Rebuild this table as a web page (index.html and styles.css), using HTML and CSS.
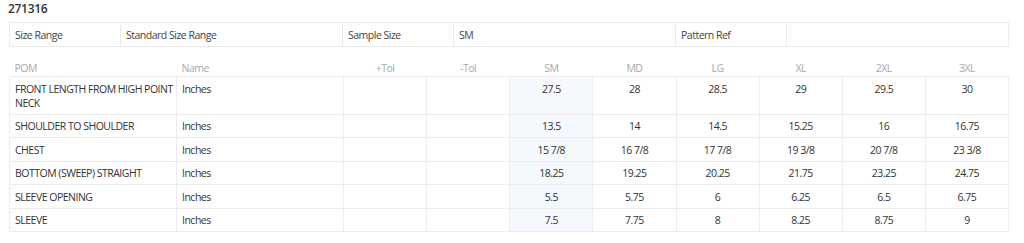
FILE: index.html
```html
<!DOCTYPE html>
<html lang="en">
<head>
<meta charset="utf-8">
<title>271316</title>
<link rel="stylesheet" href="styles.css">
</head>
<body>
<div class="ghost" aria-hidden="true">
  <span class="g1">rns</span>
  <span class="g2">nents</span>
  <span class="g3">missions</span>
  <span class="g4">Choices</span>
</div>
<main class="page">
  <h1 class="title">271316</h1>
  <table class="info">
    <colgroup>
      <col class="c-label"><col class="c-value"><col class="c-label"><col class="c-value"><col class="c-label"><col class="c-value">
    </colgroup>
    <tr>
      <td>Size Range</td><td>Standard Size Range</td>
      <td>Sample Size</td><td>SM</td>
      <td>Pattern Ref</td><td></td>
    </tr>
  </table>
  <table class="spec">
    <colgroup>
      <col class="c-wide"><col class="c-wide">
      <col class="c-n"><col class="c-n"><col class="c-n"><col class="c-n"><col class="c-n"><col class="c-n"><col class="c-n"><col class="c-n">
    </colgroup>
    <thead>
      <tr>
        <th class="left">POM</th><th class="left">Name</th><th>+Tol</th><th>-Tol</th>
        <th>SM</th><th>MD</th><th>LG</th><th>XL</th><th>2XL</th><th>3XL</th>
      </tr>
    </thead>
    <tbody>
      <tr><td class="left">FRONT LENGTH FROM HIGH POINT NECK</td><td class="left">Inches</td><td></td><td></td><td class="sample">27.5</td><td>28</td><td>28.5</td><td>29</td><td>29.5</td><td>30</td></tr>
      <tr><td class="left">SHOULDER TO SHOULDER</td><td class="left">Inches</td><td></td><td></td><td class="sample">13.5</td><td>14</td><td>14.5</td><td>15.25</td><td>16</td><td>16.75</td></tr>
      <tr><td class="left">CHEST</td><td class="left">Inches</td><td></td><td></td><td class="sample">15 7/8</td><td>16 7/8</td><td>17 7/8</td><td>19 3/8</td><td>20 7/8</td><td>23 3/8</td></tr>
      <tr><td class="left">BOTTOM (SWEEP) STRAIGHT</td><td class="left">Inches</td><td></td><td></td><td class="sample">18.25</td><td>19.25</td><td>20.25</td><td>21.75</td><td>23.25</td><td>24.75</td></tr>
      <tr><td class="left">SLEEVE OPENING</td><td class="left">Inches</td><td></td><td></td><td class="sample">5.5</td><td>5.75</td><td>6</td><td>6.25</td><td>6.5</td><td>6.75</td></tr>
      <tr><td class="left">SLEEVE</td><td class="left">Inches</td><td></td><td></td><td class="sample">7.5</td><td>7.75</td><td>8</td><td>8.25</td><td>8.75</td><td>9</td></tr>
    </tbody>
  </table>
</main>
</body>
</html>
```

FILE: styles.css
```css
html, body {
  margin: 0;
  padding: 0;
  background: #ffffff;
}

body {
  font-family: "Open Sans", "Liberation Sans", sans-serif;
  font-size: 10.5px;
  letter-spacing: -0.5px;
  color: #333333;
}

.ghost {
  position: absolute;
  left: 0;
  top: 0;
  z-index: -1;
  display: flex;
  flex-direction: column;
  font-size: 12px;
  letter-spacing: 0;
  line-height: 26px;
  color: #f1f1f1;
  padding-top: 4px;
}

.ghost span { display: block; }
.ghost .g1 { margin-left: -3px; }
.ghost .g2 { margin-left: -7px; }
.ghost .g3 { margin-left: -5px; }
.ghost .g4 { margin-left: 10px; }

.page {
  padding: 0 16px 0 9px;
}

.title {
  margin: 0 0 5px -1px;
  padding-top: 1px;
  font-size: 12px;
  letter-spacing: -0.3px;
  line-height: 16px;
  font-weight: 600;
  color: #333333;
}

table {
  border-collapse: collapse;
  table-layout: fixed;
  width: 999px;
}

.info {
  background: #ffffff;
}

.info .c-label { width: 111px; }
.info .c-value { width: 222px; }

.info td {
  border: 1px solid #ebebeb;
  height: 24px;
  box-sizing: border-box;
  padding: 0 5px;
  line-height: 14px;
  color: #444444;
  vertical-align: middle;
}

.spec {
  margin-top: 7px;
}

.spec .c-wide { width: 167px; }
.spec .c-n { width: 83.125px; }

.spec th {
  font-weight: 400;
  color: #a8a8a8;
  text-align: center;
  padding: 7px 5px 1px;
  line-height: 14px;
  border: none;
}

.spec td {
  border: 1px solid #ececec;
  padding: 4.5px 5px 4px;
  line-height: 14px;
  text-align: center;
  vertical-align: top;
  color: #333333;
}

.spec .left {
  text-align: left;
  padding-right: 0;
}

.spec td.sample {
  background: #f5f8fd;
}
```
